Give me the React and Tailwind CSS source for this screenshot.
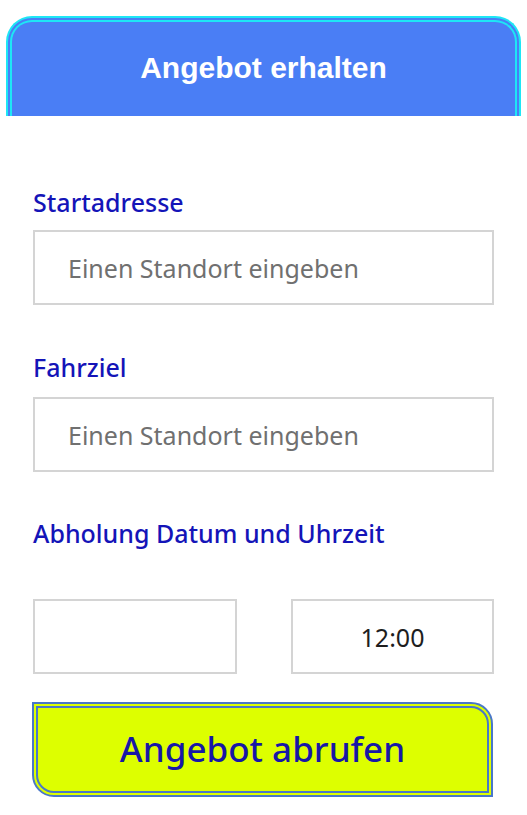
import React from 'react';

const Label = ({ children, className = '' }) => (
  <label className={`block h-[30px] leading-[30px] text-[25px] font-medium text-[#1414b8] font-['Noto_Sans',sans-serif] ${className}`}>
    {children}
  </label>
);

const Field = ({ placeholder, className = '' }) => (
  <input
    type="text"
    placeholder={placeholder}
    className={`block w-full h-[75px] border-2 border-[#d4d4d4] bg-white pl-[33px] text-[25px] text-[#222] placeholder:text-[#707070] font-['Noto_Sans',sans-serif] outline-none ${className}`}
  />
);

export default function App() {
  return (
    <div className="w-[527px] min-h-[815px] bg-white pt-[16px]">
      <div className="mx-[6px] h-[100px] rounded-t-[26px] border-[6px] border-b-0 border-double border-[#1ee6f5] bg-[#4a7ef5] flex items-center justify-center">
        <h1 className="text-white text-[30px] font-bold font-['Liberation_Sans',Arial,sans-serif] -mt-[4px]">
          Angebot erhalten
        </h1>
      </div>

      <form className="px-[33px] pt-[71px]" onSubmit={(e) => e.preventDefault()}>
        <Label>Startadresse</Label>
        <Field placeholder="Einen Standort eingeben" className="mt-[13px]" />

        <Label className="mt-[47px]">Fahrziel</Label>
        <Field placeholder="Einen Standort eingeben" className="mt-[15px]" />

        <Label className="mt-[46px]">Abholung Datum und Uhrzeit</Label>

        <div className="mt-[51px] flex justify-between">
          <input
            type="text"
            className="block w-[204px] h-[75px] border-2 border-[#d4d4d4] bg-white outline-none"
          />
          <input
            type="text"
            defaultValue="12:00"
            className="block w-[203px] h-[75px] border-2 border-[#d4d4d4] bg-white text-center text-[25px] text-[#1e1e1e] font-['Noto_Sans',sans-serif] outline-none"
          />
        </div>

        <button
          type="submit"
          className="mt-[28px] -ml-px w-[461px] h-[95px] rounded-tr-[22px] rounded-bl-[22px] border-[6px] border-double border-[#4a78c8] bg-[#ddff00] text-[35px] font-medium text-[#1717a6] font-['Noto_Sans',sans-serif]"
        >
          Angebot abrufen
        </button>
      </form>
    </div>
  );
}
